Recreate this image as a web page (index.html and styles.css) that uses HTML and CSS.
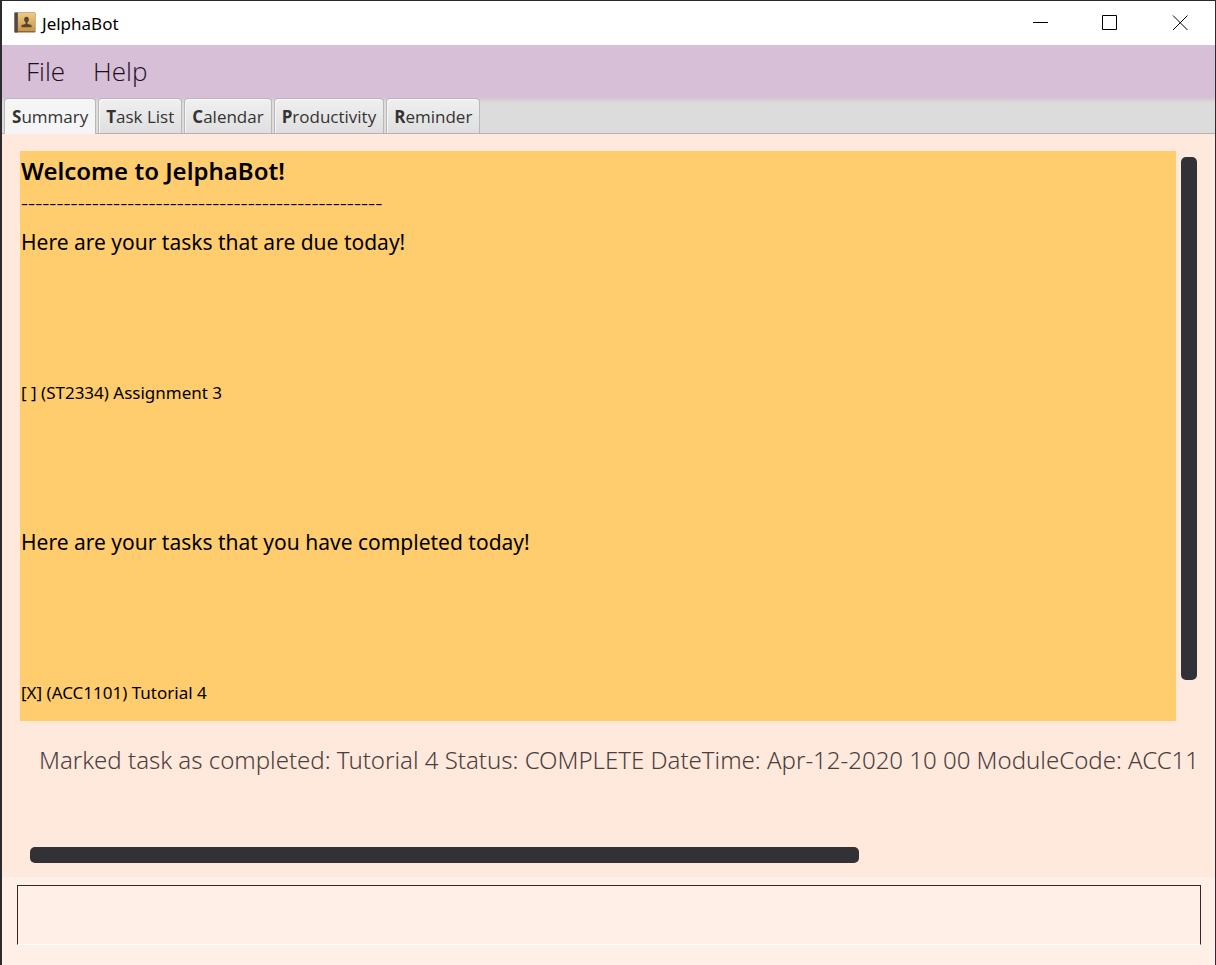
FILE: index.html
```html
<!DOCTYPE html>
<html lang="en">
<head>
<meta charset="utf-8">
<title>JelphaBot</title>
<link rel="stylesheet" href="styles.css">
</head>
<body>
<div class="window">
  <header class="titlebar">
    <svg class="app-icon" width="22" height="22" viewBox="0 0 22 22" aria-hidden="true">
      <defs><linearGradient id="cover" x1="0" y1="0" x2="0" y2="1"><stop offset="0" stop-color="#f0ca80"/><stop offset="1" stop-color="#c9964a"/></linearGradient></defs>
      <rect x="0.5" y="0.5" width="21" height="20" rx="1" fill="#8c6633"/>
      <rect x="4" y="1" width="17" height="18" fill="url(#cover)"/>
      <rect x="0.5" y="0.5" width="3" height="20" fill="#4c4748"/>
      <ellipse cx="12.5" cy="7.500" rx="2.300" ry="2.800" fill="#56452f"/>
      <path d="M11.500 9h2v3l4 1v2.300H7.500v-2.300l4-1z" fill="#56452f"/>
    </svg>
    <span class="app-name">JelphaBot</span>
    <div class="window-controls">
      <button class="control" aria-label="Minimize"><svg width="16" height="16" viewBox="0 0 16 16"><path d="M1 7.500H16" /></svg></button>
      <button class="control" aria-label="Maximize"><svg width="16" height="16" viewBox="0 0 16 16"><path d="M.5 .5H14.500V14.500H.5Z" /></svg></button>
      <button class="control" aria-label="Close"><svg width="16" height="16" viewBox="0 0 16 16"><path d="M1 .5L15.500 15M15.500 .5L1 15" /></svg></button>
    </div>
  </header>
  <nav class="menubar">
    <button class="menu">File</button>
    <button class="menu">Help</button>
  </nav>
  <div class="tabs" role="tablist">
    <button class="tab selected" role="tab" aria-selected="true"><span><b>S</b>ummary</span></button>
    <button class="tab" role="tab"><span><b>T</b>ask List</span></button>
    <button class="tab" role="tab"><span><b>C</b>alendar</span></button>
    <button class="tab" role="tab"><span><b>P</b>roductivity</span></button>
    <button class="tab" role="tab"><span><b>R</b>eminder</span></button>
  </div>
  <main class="content">
    <div class="summary">
      <h1 class="welcome">Welcome to JelphaBot!</h1>
      <p class="rule">---------------------------------------------------</p>
      <h2 class="section-title">Here are your tasks that are due today!</h2>
      <ul class="task-list"><li>[ ] (ST2334) Assignment 3</li></ul>
      <h2 class="section-title">Here are your tasks that you have completed today!</h2>
      <ul class="task-list"><li>[X] (ACC1101) Tutorial 4</li></ul>
    </div>
    <div class="scroll-track"><div class="scroll-thumb"></div></div>
  </main>
  <section class="result">
    <textarea class="result-text" aria-label="Result" wrap="off" readonly>Marked task as completed: Tutorial 4 Status: COMPLETE DateTime: Apr-12-2020 10 00 ModuleCode: ACC1101</textarea>
    <div class="result-track"><div class="result-thumb"></div></div>
  </section>
  <footer class="command">
    <input class="command-input" type="text" aria-label="Command">
  </footer>
</div>
</body>
</html>
```
FILE: styles.css
```css
* { box-sizing: border-box; }
body {
  margin: 0;
  background: #2b2a2e;
  font-family: "Open Sans", "Noto Sans", sans-serif;
  color: #000;
}
button { font: inherit; color: inherit; border: 0; background: none; padding: 0; }
.window {
  display: flex;
  flex-direction: column;
  height: 100vh;
  padding: 1px 1px 0 2px;
}
.titlebar {
  display: flex;
  align-items: center;
  flex: 0 0 44px;
  padding-left: 12px;
  background: #fff;
}
.app-name { margin-left: 6px; font-family: "Noto Sans", sans-serif; font-size: 17px; }
.window-controls { display: flex; align-self: stretch; margin-left: auto; }
.control { display: flex; align-items: center; justify-content: center; width: 70px; }
.control svg { fill: none; stroke: #000; stroke-width: 1; }
.menubar {
  display: flex;
  flex: 0 0 53px;
  gap: 28px;
  padding: 0 0 2px 24px;
  background: #d6bfd7;
}
.menu { font-size: 26px; font-weight: 300; color: #1c101d; }
.tabs {
  display: flex;
  flex: 0 0 36px;
  gap: 2px;
  padding-left: 2px;
  background: linear-gradient(#cfcacf, #dcdcdc 5px, #dcdcdc);
  border-bottom: 1px solid #b5b2b2;
}
.tab {
  padding: 0 7px;
  border: 1px solid #b8b8b8;
  border-bottom: 0;
  border-radius: 4px 4px 0 0;
  background: linear-gradient(#f0f0f0, #dfdfdf);
  box-shadow: inset 1px 1px #f7f7f7;
  font-size: 17px;
  color: #333;
}
.tab.selected { margin-bottom: -1px; background: #f5f5f5; }
.content {
  display: flex;
  flex: 1 1 0;
  min-height: 0;
  gap: 5px;
  padding: 17px 18px 0;
  background: #ffe8dc;
}
.summary {
  flex: 1;
  overflow: hidden;
  padding-left: 1px;
  background: #ffcc6e;
  font-family: "Noto Sans", sans-serif;
}
.welcome { margin: 0; font-size: 24px; font-weight: 600; line-height: 40px; }
.rule { margin: 0 0 9px; font-size: 22px; font-weight: 300; line-height: 22px; }
.section-title { margin: 0; font-size: 21px; font-weight: 400; line-height: 40px; }
.task-list {
  display: flex;
  flex-direction: column;
  justify-content: center;
  min-height: 260px;
  margin: 0;
  padding: 0;
  list-style: none;
  font-size: 17px;
}
.scroll-track { width: 16px; padding: 6px 0 41px; }
.scroll-thumb { height: 100%; border-radius: 5px; background: #323236; }
.result {
  display: flex;
  flex-direction: column;
  flex: 0 0 156px;
  padding: 20px 18px 14px 28px;
  background: #ffe8dc;
}
.result-text {
  flex: 1;
  width: 100%;
  padding: 0 0 0 9px;
  border: 0;
  outline: 0;
  overflow: hidden;
  resize: none;
  background: none;
  font: 300 24px/38px "Noto Sans", sans-serif;
  color: #4a3f3e;
}
.result-thumb { width: 71%; height: 16px; border-radius: 5px; background: #323236; }
.command { flex: 0 0 88px; padding: 8px 14px 20px 15px; background: #ffefe6; }
.command-input {
  display: block;
  width: 100%;
  height: 60px;
  padding: 0 12px;
  border: 1px solid #2f2928;
  border-bottom-color: #fff;
  background: none;
  font: 300 24px "Open Sans", sans-serif;
}
```
